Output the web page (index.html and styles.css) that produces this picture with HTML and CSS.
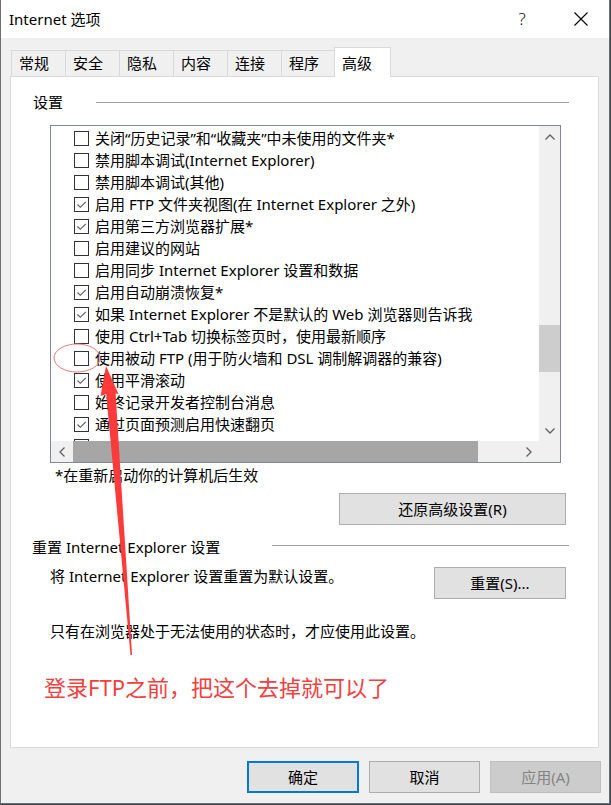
FILE: index.html
```html
<!DOCTYPE html>
<html lang="zh-CN">
<head>
<meta charset="utf-8">
<title>Internet 选项</title>
<link rel="stylesheet" href="styles.css">
</head>
<body>
<div class="window">
  <div class="titlebar">
    <span class="title">Internet 选项</span>
    <span class="help">?</span>
    <span class="close"><svg width="14" height="14" viewBox="0 0 14 14"><path d="M0.5 0.5L13.5 13.5M13.5 0.5L0.5 13.5" stroke="#000" stroke-width="1.1" fill="none"/></svg></span>
  </div>
  <div class="content">
    <div class="tabs">
      <div class="tab">常规</div>
      <div class="tab">安全</div>
      <div class="tab">隐私</div>
      <div class="tab">内容</div>
      <div class="tab">连接</div>
      <div class="tab">程序</div>
      <div class="tab active">高级</div>
    </div>
    <div class="panel">
      <div class="group-head head-settings"><span class="group-label">设置</span><i class="rule"></i></div>
      <div class="listbox">
        <div class="list-view">
          <div class="item"><span class="cb"></span>关闭“历史记录”和“收藏夹”中未使用的文件夹*</div>
          <div class="item"><span class="cb"></span>禁用脚本调试(Internet Explorer)</div>
          <div class="item"><span class="cb"></span>禁用脚本调试(其他)</div>
          <div class="item"><span class="cb checked"><svg viewBox="0 0 13 13"><path d="M2.5 6.5L5.3 9.3L10.8 3.8" stroke="#555" stroke-width="1.1" fill="none"/></svg></span>启用 FTP 文件夹视图(在 Internet Explorer 之外)</div>
          <div class="item"><span class="cb checked"><svg viewBox="0 0 13 13"><path d="M2.5 6.5L5.3 9.3L10.8 3.8" stroke="#555" stroke-width="1.1" fill="none"/></svg></span>启用第三方浏览器扩展*</div>
          <div class="item"><span class="cb"></span>启用建议的网站</div>
          <div class="item"><span class="cb"></span>启用同步 Internet Explorer 设置和数据</div>
          <div class="item"><span class="cb checked"><svg viewBox="0 0 13 13"><path d="M2.5 6.5L5.3 9.3L10.8 3.8" stroke="#555" stroke-width="1.1" fill="none"/></svg></span>启用自动崩溃恢复*</div>
          <div class="item"><span class="cb checked"><svg viewBox="0 0 13 13"><path d="M2.5 6.5L5.3 9.3L10.8 3.8" stroke="#555" stroke-width="1.1" fill="none"/></svg></span>如果 Internet Explorer 不是默认的 Web 浏览器则告诉我</div>
          <div class="item"><span class="cb"></span>使用 Ctrl+Tab 切换标签页时，使用最新顺序</div>
          <div class="item"><span class="cb"></span>使用被动 FTP (用于防火墙和 DSL 调制解调器的兼容)</div>
          <div class="item"><span class="cb checked"><svg viewBox="0 0 13 13"><path d="M2.5 6.5L5.3 9.3L10.8 3.8" stroke="#555" stroke-width="1.1" fill="none"/></svg></span>使用平滑滚动</div>
          <div class="item"><span class="cb"></span>始终记录开发者控制台消息</div>
          <div class="item"><span class="cb checked"><svg viewBox="0 0 13 13"><path d="M2.5 6.5L5.3 9.3L10.8 3.8" stroke="#555" stroke-width="1.1" fill="none"/></svg></span>通过页面预测启用快速翻页</div>
          <div class="item"><span class="cb"></span></div>
        </div>
        <div class="vscroll">
          <div class="sbtn"><svg width="10" height="6" viewBox="0 0 10 6"><path d="M0.5 5.5L5 1L9.5 5.5" stroke="#606060" stroke-width="1.3" fill="none"/></svg></div>
          <div class="vtrack"><div class="vthumb"></div></div>
          <div class="sbtn"><svg width="10" height="6" viewBox="0 0 10 6"><path d="M0.5 0.5L5 5L9.5 0.5" stroke="#606060" stroke-width="1.3" fill="none"/></svg></div>
        </div>
        <div class="hscroll">
          <div class="sbtn"><svg width="6" height="10" viewBox="0 0 6 10"><path d="M5.5 0.5L1 5L5.5 9.5" stroke="#606060" stroke-width="1.3" fill="none"/></svg></div>
          <div class="htrack"><div class="hthumb"></div></div>
          <div class="sbtn"><svg width="6" height="10" viewBox="0 0 6 10"><path d="M0.5 0.5L5 5L0.5 9.5" stroke="#606060" stroke-width="1.3" fill="none"/></svg></div>
        </div>
        <div class="corner"></div>
      </div>
      <p class="note">*在重新启动你的计算机后生效</p>
      <div class="row-right"><button class="btn btn-restore">还原高级设置(R)</button></div>
      <div class="group-head head-reset"><span class="group-label">重置 Internet Explorer 设置</span><i class="rule"></i></div>
      <div class="reset-row"><span class="reset-text">将 Internet Explorer 设置重置为默认设置。</span><button class="btn btn-reset">重置(S)...</button></div>
      <p class="warn">只有在浏览器处于无法使用的状态时，才应使用此设置。</p>
      <p class="annot">登录FTP之前，把这个去掉就可以了</p>
    </div>
    <div class="footer">
      <button class="btn btn-ok">确定</button>
      <button class="btn btn-cancel">取消</button>
      <button class="btn btn-apply">应用(A)</button>
    </div>
  </div>
  <svg class="overlay" width="611" height="805" viewBox="0 0 611 805">
    <ellipse cx="77" cy="358" rx="23" ry="14" fill="none" stroke="#ec7a7a" stroke-width="1"/>
    <path d="M106 366L118.5 394L111 392.5L100.5 396Z" fill="#ff3a3a"/>
    <path d="M106 392L115.5 392L132 655L130.5 655Z" fill="#ff3a3a"/>
  </svg>
</div>
</body>
</html>
```

FILE: styles.css
```css
* {
  box-sizing: border-box;
  margin: 0;
  padding: 0;
}

html, body {
  width: 611px;
  height: 805px;
  overflow: hidden;
}

body {
  background: #3b4756;
  font-family: "Noto Sans", "Noto Sans CJK SC", sans-serif;
  font-size: 15px;
  line-height: 20px;
  color: #000;
}

.window {
  position: relative;
  width: 610px;
  height: 804px;
  background: #f0f0f0;
  border: 1px solid #6e6e6e;
  border-top: none;
  display: flex;
  flex-direction: column;
}

.titlebar {
  height: 38px;
  background: #fff;
  display: flex;
  align-items: center;
  padding: 0 5px 0 8px;
}

.title {
  flex: 1;
  font-size: 15px;
}

.help {
  width: 46px;
  text-align: center;
  font-size: 17px;
  font-weight: 300;
  color: #111;
}

.close {
  width: 46px;
  margin-left: 13px;
  display: flex;
  justify-content: center;
  align-items: center;
}

.content {
  flex: 1;
  padding: 9px 0 0 9px;
  display: flex;
  flex-direction: column;
}

.tabs {
  display: flex;
  align-items: flex-end;
  height: 30px;
  margin-left: 1px;
  margin-bottom: -1px;
  position: relative;
  z-index: 1;
}

.tab {
  width: 55px;
  height: 26px;
  margin-right: -1px;
  margin-bottom: 1px;
  padding-left: 7px;
  border: 1px solid #d9d9d9;
  border-bottom: none;
  background: #f0f0f0;
  line-height: 24px;
}

.tab.active {
  width: 57px;
  height: 30px;
  margin-left: -1px;
  margin-bottom: 0;
  padding-top: 3px;
  background: #fff;
}

.panel {
  width: 589px;
  height: 672px;
  background: #fff;
  border: 1px solid #d9d9d9;
  display: flex;
  flex-direction: column;
}

.group-head {
  display: flex;
  align-items: center;
  height: 20px;
}

.rule {
  flex: 1;
  height: 1px;
  background: #a0a0a0;
  margin-right: 29px;
}

.head-settings {
  margin-top: 15px;
  padding-left: 22px;
}

.head-settings .rule {
  margin-left: 33px;
}

.head-reset {
  margin-top: 12px;
  padding-left: 21px;
}

.head-reset .rule {
  margin-left: 52px;
  align-self: flex-start;
  margin-top: 8px;
}

.listbox {
  margin: 13px 0 0 39px;
  width: 511px;
  height: 338px;
  border: 1px solid #828790;
  display: grid;
  grid-template-columns: 1fr 21px;
  grid-template-rows: 1fr 21px;
}

.list-view {
  overflow: hidden;
  padding-top: 1px;
  background: #fff;
}

.item {
  height: 22px;
  display: flex;
  align-items: center;
  padding-left: 23px;
  white-space: nowrap;
}

.cb {
  flex: none;
  width: 15px;
  height: 15px;
  border: 1px solid #333;
  margin-right: 6px;
  display: flex;
}

.cb svg {
  width: 13px;
  height: 13px;
}

.vscroll {
  background: #f0f0f0;
  display: flex;
  flex-direction: column;
}

.sbtn {
  flex: none;
  width: 21px;
  height: 21px;
  display: flex;
  align-items: center;
  justify-content: center;
}

.vtrack {
  flex: 1;
}

.vthumb {
  margin-top: 178px;
  height: 47px;
  background: #cdcdcd;
}

.hscroll {
  background: #f0f0f0;
  display: flex;
}

.htrack {
  flex: 1;
}

.hthumb {
  margin-left: 1px;
  width: 405px;
  height: 21px;
  background: #a6a6a6;
}

.corner {
  background: #f0f0f0;
}

.note {
  margin: 2px 0 0 44px;
}

.row-right {
  display: flex;
  justify-content: flex-end;
  margin-top: 8px;
  padding-right: 32px;
}

.btn {
  font-family: inherit;
  font-size: 15px;
  line-height: 20px;
  color: #000;
  height: 32px;
  background: #e1e1e1;
  border: 1px solid #adadad;
}

.btn-restore {
  width: 227px;
}

.reset-row {
  display: flex;
  align-items: flex-start;
  justify-content: space-between;
  margin-top: 10px;
  padding: 0 32px 0 39px;
}

.reset-text {
  margin-top: -1px;
}

.btn-reset {
  width: 132px;
}

.warn {
  margin: 22px 0 0 39px;
}

.annot {
  margin: 31px 0 0 33px;
  font-size: 22px;
  line-height: 30px;
  color: #f2403f;
}

.footer {
  display: flex;
  justify-content: flex-end;
  gap: 10px;
  width: 591px;
  margin-top: 13px;
}

.btn-ok {
  width: 112px;
  border: 2px solid #0078d7;
}

.btn-cancel {
  width: 111px;
}

.btn-apply {
  width: 111px;
  background: #cccccc;
  border-color: #bfbfbf;
  color: #838383;
}

.overlay {
  position: absolute;
  left: -1px;
  top: 0;
  pointer-events: none;
}
```
